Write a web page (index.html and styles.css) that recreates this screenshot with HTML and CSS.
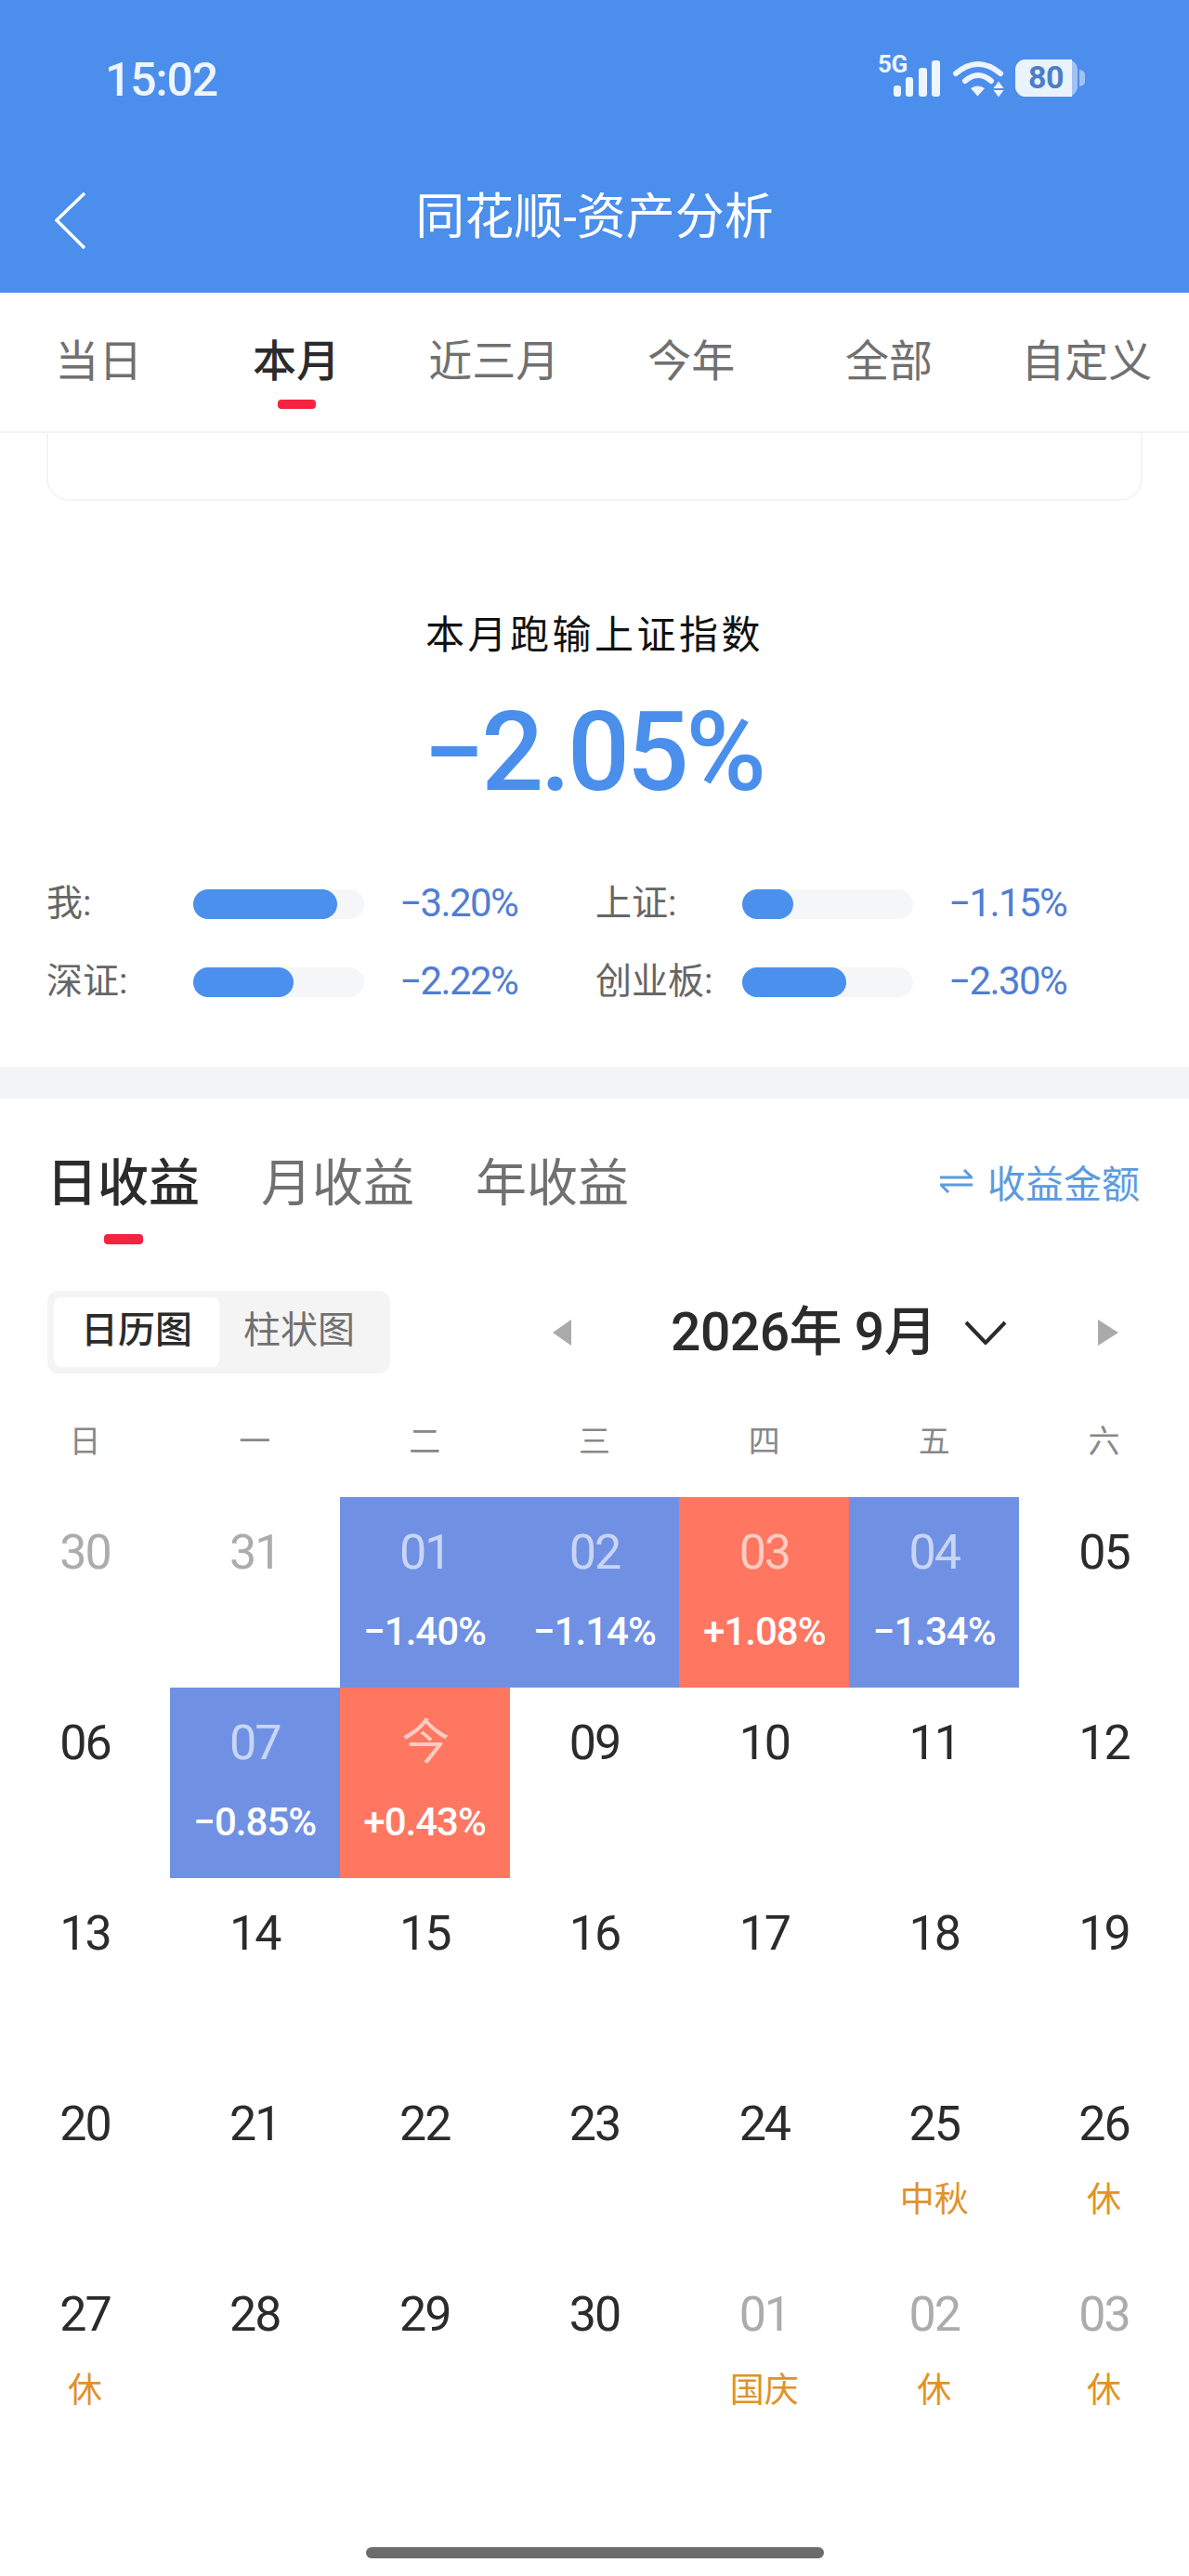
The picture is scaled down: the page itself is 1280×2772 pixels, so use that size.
FILE: index.html
```html
<!DOCTYPE html>
<html lang="zh-CN">
<head>
<meta charset="utf-8">
<title>同花顺-资产分析</title>
<link rel="stylesheet" href="styles.css">
</head>
<body>
<header class="header">
  <div class="status">
    <span class="time">15:02</span>
    <svg class="status-icons" width="229" height="57" viewBox="-4 -10 229 57">
      <text x="0" y="18" class="sig-text">5G</text>
      <rect x="17" y="32" width="8" height="12" rx="3" fill="#eef4fe"/>
      <rect x="30" y="23" width="8" height="21" rx="3" fill="#eef4fe"/>
      <rect x="44" y="13" width="9" height="31" rx="3" fill="#eef4fe"/>
      <rect x="58" y="5" width="9" height="39" rx="3" fill="#eef4fe"/>
      <path d="M84 19Q108 -1 132 19" fill="none" stroke="#eef4fe" stroke-width="6" stroke-linecap="round"/>
      <path d="M94 27Q108 15 122 27" fill="none" stroke="#eef4fe" stroke-width="6" stroke-linecap="round"/>
      <path d="M100 35Q107.500 30 115 35L108 43Q107.500 43.500 107 43Z" fill="#eef4fe"/>
      <path d="M130 27.500L135.500 35H124.500Z M124.500 37H135.500L130 44.500Z" fill="#eef4fe"/>
      <rect x="148" y="4" width="67" height="40" rx="11" fill="#a3c2f3"/>
      <path d="M159 4H209V44H159A11 11 0 0 1 148 33V15A11 11 0 0 1 159 4Z" fill="#eaf2fd"/>
      <path d="M217 15Q223 16 223 20V28Q223 32 217 33Z" fill="#a3c2f3"/>
      <text x="181" y="35" class="bat-text">80</text>
    </svg>
  </div>
  <div class="nav">
    <svg class="back" width="33" height="61" viewBox="0 0 33 61"><path d="M32 1L2 30L32 60" fill="none" stroke="#fff" stroke-width="3.500"/></svg>
    <h1 class="title">同花顺-资产分析</h1>
  </div>
</header>

<nav class="tabs">
  <span class="tab">当日</span>
  <span class="tab tab-active">本月</span>
  <span class="tab">近三月</span>
  <span class="tab">今年</span>
  <span class="tab">全部</span>
  <span class="tab">自定义</span>
</nav>

<div class="card-end"></div>

<section class="summary">
  <div class="sum-title">本月跑输上证指数</div>
  <div class="sum-value">−2.05%</div>
  <div class="metrics">
    <div class="metric"><span class="m-label">我:</span><span class="track"><span class="fill" style="width:155px"></span></span><span class="m-value">−3.20%</span></div>
    <div class="metric"><span class="m-label">上证:</span><span class="track"><span class="fill" style="width:55px"></span></span><span class="m-value">−1.15%</span></div>
    <div class="metric"><span class="m-label">深证:</span><span class="track"><span class="fill" style="width:108px"></span></span><span class="m-value">−2.22%</span></div>
    <div class="metric"><span class="m-label">创业板:</span><span class="track"><span class="fill" style="width:112px"></span></span><span class="m-value">−2.30%</span></div>
  </div>
</section>

<div class="band"></div>

<section class="earn">
  <div class="earn-tabs">
    <span class="etab etab-active">日收益</span>
    <span class="etab">月收益</span>
    <span class="etab">年收益</span>
    <span class="switch">
      <svg width="35" height="26" viewBox="0 0 35 26"><path d="M0 9H34L26 1M35 17H1L9 25" fill="none" stroke="#5b9bdc" stroke-width="3"/></svg>
      <span>收益金额</span>
    </span>
  </div>

  <div class="toolbar">
    <div class="seg">
      <span class="seg-item seg-active">日历图</span>
      <span class="seg-item">柱状图</span>
    </div>
    <svg class="arrow-l" width="20" height="28" viewBox="0 0 20 28"><path d="M20 0V28L0 14Z" fill="#aaa"/></svg>
    <span class="month">2026年 9月</span>
    <svg class="chev" width="46" height="26" viewBox="0 0 46 26"><path d="M2 2L23 24L44 2" fill="none" stroke="#2b2b2b" stroke-width="4"/></svg>
    <svg class="arrow-r" width="22" height="28" viewBox="0 0 22 28"><path d="M0 0V28L22 14Z" fill="#aaa"/></svg>
  </div>

  <div class="weekdays">
    <span>日</span><span>一</span><span>二</span><span>三</span><span>四</span><span>五</span><span>六</span>
  </div>

  <div class="days">
    <div class="day off"><span class="num">30</span></div>
    <div class="day off"><span class="num">31</span></div>
    <div class="day down"><span class="num">01</span><span class="pct">−1.40%</span></div>
    <div class="day down"><span class="num">02</span><span class="pct">−1.14%</span></div>
    <div class="day up"><span class="num">03</span><span class="pct">+1.08%</span></div>
    <div class="day down"><span class="num">04</span><span class="pct">−1.34%</span></div>
    <div class="day"><span class="num">05</span></div>

    <div class="day"><span class="num">06</span></div>
    <div class="day down"><span class="num">07</span><span class="pct">−0.85%</span></div>
    <div class="day up"><span class="num">今</span><span class="pct">+0.43%</span></div>
    <div class="day"><span class="num">09</span></div>
    <div class="day"><span class="num">10</span></div>
    <div class="day"><span class="num">11</span></div>
    <div class="day"><span class="num">12</span></div>

    <div class="day"><span class="num">13</span></div>
    <div class="day"><span class="num">14</span></div>
    <div class="day"><span class="num">15</span></div>
    <div class="day"><span class="num">16</span></div>
    <div class="day"><span class="num">17</span></div>
    <div class="day"><span class="num">18</span></div>
    <div class="day"><span class="num">19</span></div>

    <div class="day"><span class="num">20</span></div>
    <div class="day"><span class="num">21</span></div>
    <div class="day"><span class="num">22</span></div>
    <div class="day"><span class="num">23</span></div>
    <div class="day"><span class="num">24</span></div>
    <div class="day"><span class="num">25</span><span class="hol">中秋</span></div>
    <div class="day"><span class="num">26</span><span class="hol">休</span></div>

    <div class="day"><span class="num">27</span><span class="hol">休</span></div>
    <div class="day"><span class="num">28</span></div>
    <div class="day"><span class="num">29</span></div>
    <div class="day"><span class="num">30</span></div>
    <div class="day off"><span class="num">01</span><span class="hol">国庆</span></div>
    <div class="day off"><span class="num">02</span><span class="hol">休</span></div>
    <div class="day off"><span class="num">03</span><span class="hol">休</span></div>
  </div>
</section>

<div class="home"></div>
</body>
</html>
```
FILE: styles.css
```css
* { box-sizing: border-box; }
html, body { margin: 0; padding: 0; }
body {
  width: 1280px;
  height: 2772px;
  overflow: hidden;
  background: #fff;
  font-family: Roboto, "Noto Sans CJK SC", sans-serif;
  color: #2b2b2b;
}
.header { height: 315px; background: #4c8eec; color: #fff; }
.status { height: 190px; padding: 60px 0 0 113px; display: flex; align-items: flex-start; }
.time { font-size: 50px; line-height: 52px; font-weight: 500; letter-spacing: -1.200px; color: #eef4fe; }
.status-icons { margin-left: auto; margin-right: 110px; margin-top: -10px; }
.sig-text { font: 700 26px Roboto, sans-serif; fill: #eef4fe; letter-spacing: -.5px; }
.bat-text { font: 700 34px Roboto, sans-serif; fill: #4a7fc6; text-anchor: middle; letter-spacing: -.5px; }
.nav { height: 125px; display: flex; align-items: flex-start; position: relative; padding: 17px 0 0 59px; }
.title {
  margin: 0;
  position: absolute;
  left: 0; right: 0; top: 13px;
  text-align: center;
  font-size: 53px;
  line-height: 62px;
  font-weight: 400;
  color: #fff;
}
.tabs { height: 151px; display: flex; padding-right: 4px; border-bottom: 2px solid #f1f2f4; }
.tab {
  flex: 1;
  text-align: center;
  font-size: 47px;
  line-height: 60px;
  padding-top: 44px;
  color: #707070;
}
.tab-active { color: #2b2b2b; font-weight: 500; }
.tab-active::after {
  content: "";
  display: block;
  width: 41px;
  height: 10px;
  border-radius: 4px;
  margin: 11px auto 0;
  background: #f5233f;
}
.card-end {
  height: 73px;
  margin: 0 50px;
  border: 2px solid #f3f4f6;
  border-top: 0;
  border-radius: 0 0 24px 24px;
}
.summary { height: 609px; padding-top: 115px; }
.sum-title { text-align: center; font-size: 42px; line-height: 60px; letter-spacing: 3.500px; color: #111; }
.sum-value { margin-top: 36px; padding-right: 3px; text-align: center; font-size: 118px; line-height: 120px; font-weight: 500; letter-spacing: -3.500px; color: #4a8fec; }
.metrics { margin-top: 78px; padding-left: 50px; display: grid; grid-template-columns: 591px 591px; row-gap: 34px; }
.metric { height: 50px; display: flex; align-items: center; }
.m-label { width: 158px; font-size: 39px; line-height: 50px; padding-bottom: 2px; color: #666; }
.track { width: 184px; height: 32px; border-radius: 16px; background: #f5f6f7; display: block; }
.fill { display: block; height: 32px; border-radius: 16px; background: #4a90ec; }
.m-value { margin-left: 38px; font-size: 42px; line-height: 50px; padding-bottom: 2px; letter-spacing: -1.600px; color: #517dd3; }
.band { height: 34px; background: #f3f4f7; }
.earn { padding-top: 61px; }
.earn-tabs { height: 96px; padding: 0 53px 0 50px; display: flex; align-items: flex-start; column-gap: 66px; }
.etab { font-size: 55px; line-height: 60px; color: #707070; }
.etab-active { color: #2b2b2b; font-weight: 500; }
.etab-active::after {
  content: "";
  display: block;
  width: 42px;
  height: 11px;
  border-radius: 4px;
  margin: 25px auto 0;
  background: #f5233f;
}
.switch { margin-left: auto; display: flex; align-items: center; column-gap: 16px; height: 56px; font-size: 41px; color: #5b9be0; }
.toolbar { margin-top: 50px; padding-left: 51px; display: flex; align-items: center; height: 89px; }
.seg { width: 369px; height: 89px; padding: 7px; background: #f4f4f5; border-radius: 12px; display: flex; }
.seg-item { width: 178px; height: 75px; text-align: center; font-size: 40px; line-height: 72px; color: #707070; border-radius: 8px; }
.seg-active { background: #fff; color: #2b2b2b; font-weight: 500; }
.seg-active + .seg-item { width: 172px; }
.arrow-l { margin-left: 175px; }
.month { margin-left: 107px; width: 280px; font-size: 57px; line-height: 60px; font-weight: 500; letter-spacing: -.5px; white-space: nowrap; }
.chev { margin-left: 36px; }
.arrow-r { margin-left: 98px; }
.weekdays { margin-top: 48px; display: grid; grid-template-columns: repeat(7, 1fr); height: 50px; text-align: center; font-size: 34px; line-height: 50px; color: #888; }
.days { margin-top: 35px; display: grid; grid-template-columns: repeat(7, 1fr); grid-auto-rows: 205px; }
.day { display: flex; flex-direction: column; align-items: center; padding-top: 30px; }
.num { font-size: 52px; line-height: 60px; letter-spacing: -2px; font-weight: 400; color: #2b2b2b; }
.off .num { color: #acacac; }
.down { background: #7091e3; }
.up { background: #ff7661; }
.down .num, .up .num { color: rgba(255, 255, 255, .62); }
.pct { margin-top: 30px; font-size: 42px; line-height: 50px; letter-spacing: -1px; font-weight: 500; color: #fff; }
.hol { margin-top: 27px; font-size: 37px; line-height: 50px; color: #e0922a; }
.home { width: 493px; height: 12px; border-radius: 6px; background: #6b6b6b; margin: 105px auto 0; }
```
